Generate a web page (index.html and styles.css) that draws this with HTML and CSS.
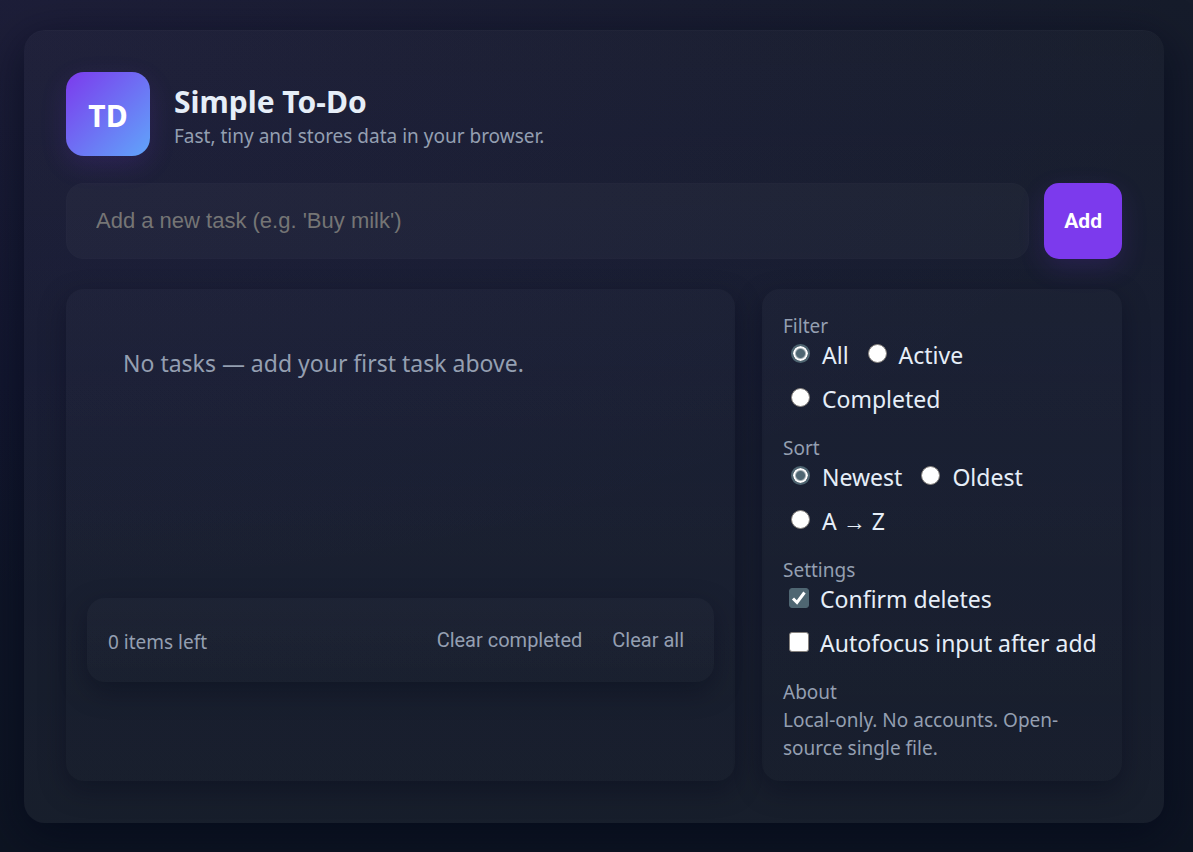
FILE: index.html
```html
<!DOCTYPE html>
<html lang="en">
<head>
<meta charset="utf-8">
<meta name="viewport" content="width=device-width, initial-scale=1">
<title>Simple To-Do</title>
<link rel="stylesheet" href="styles.css">
</head>
<body>
<main class="app">
  <header class="header">
    <div class="logo">TD</div>
    <div class="heading">
      <h1 class="title">Simple To-Do</h1>
      <p class="muted">Fast, tiny and stores data in your browser.</p>
    </div>
  </header>
  <form class="add-form">
    <input class="task-input" type="text" aria-label="New task" placeholder="Add a new task (e.g. 'Buy milk')">
    <button class="add-button" type="button">Add</button>
  </form>
  <div class="columns">
    <section class="panel tasks">
      <p class="empty">No tasks — add your first task above.</p>
      <div class="panel summary">
        <span class="muted count">0 items left</span>
        <div class="actions">
          <button class="text-button" type="button">Clear completed</button>
          <button class="text-button" type="button">Clear all</button>
        </div>
      </div>
    </section>
    <aside class="panel sidebar">
      <fieldset class="group">
        <legend class="muted">Filter</legend>
        <div class="options">
          <label class="option"><input class="radio" type="radio" name="filter" checked>All</label>
          <label class="option"><input class="radio" type="radio" name="filter">Active</label>
          <label class="option"><input class="radio" type="radio" name="filter">Completed</label>
        </div>
      </fieldset>
      <fieldset class="group">
        <legend class="muted">Sort</legend>
        <div class="options">
          <label class="option"><input class="radio" type="radio" name="sort" checked>Newest</label>
          <label class="option"><input class="radio" type="radio" name="sort">Oldest</label>
          <label class="option"><input class="radio" type="radio" name="sort">A → Z</label>
        </div>
      </fieldset>
      <fieldset class="group">
        <legend class="muted">Settings</legend>
        <div class="options checks">
          <label class="option"><input class="check" type="checkbox" checked>Confirm deletes</label>
          <label class="option"><input class="check" type="checkbox">Autofocus input after add</label>
        </div>
      </fieldset>
      <div class="about">
        <h2 class="muted">About</h2>
        <p class="muted">Local-only. No accounts. Open-source single file.</p>
      </div>
    </aside>
  </div>
</main>
</body>
</html>
```
FILE: styles.css
```css
* { box-sizing: border-box; }
body {
  margin: 0;
  min-height: 100vh;
  padding: 30px 29px 29px 24px;
  color: #e6eef8;
  font-family: "Segoe UI", "Noto Sans", sans-serif;
  font-size: 23px;
  background:
    radial-gradient(1200px 600px at 0 0, rgba(124, 58, 237, 0.07), transparent),
    linear-gradient(180deg, #161c2b, #10162a 45%, #0d1422);
}
h1, h2, p, fieldset { margin: 0; }
.app {
  padding: 42px;
  border-radius: 21px;
  background: linear-gradient(180deg, rgba(255, 255, 255, 0.014), rgba(255, 255, 255, 0.042));
  box-shadow: 0 12px 45px rgba(2, 6, 23, 0.6), inset 0 1px 0 rgba(255, 255, 255, 0.02);
}
.header { display: flex; align-items: center; gap: 24px; margin-bottom: 27px; }
.heading { padding-top: 3px; }
.logo {
  display: grid;
  place-items: center;
  width: 84px;
  height: 84px;
  padding-top: 3px;
  border-radius: 18px;
  background: linear-gradient(135deg, #7c3aed, #60a5fa);
  box-shadow: 0 9px 27px rgba(124, 58, 237, 0.16);
  color: #fff;
  font-size: 30px;
  font-weight: 700;
}
.title { font-size: 30px; line-height: 40px; font-weight: 700; }
.muted { color: #949fb1; font-size: 19px; line-height: 28px; font-weight: 400; }
.add-form { display: flex; gap: 15px; margin-bottom: 30px; }
.task-input {
  flex: 1;
  min-width: 0;
  height: 76px;
  padding: 0 29px;
  border: 1px solid rgba(255, 255, 255, 0.01);
  border-radius: 18px;
  background: rgba(255, 255, 255, 0.026);
  color: inherit;
  font-family: "Liberation Sans", Arial, sans-serif;
  font-size: 22px;
}
.task-input::placeholder { color: #757575; }
.add-button {
  padding: 0 20px;
  border: 0;
  border-radius: 15px;
  background: #7c3aed;
  box-shadow: 0 9px 27px rgba(124, 58, 237, 0.16);
  color: #fff;
  font-family: Roboto, sans-serif;
  font-size: 21px;
  font-weight: 700;
}
.columns { display: grid; grid-template-columns: 1fr 360px; gap: 27px; }
.panel {
  padding: 21px;
  border-radius: 18px;
  background: linear-gradient(180deg, rgba(255, 255, 255, 0.02), rgba(255, 255, 255, 0.002));
  box-shadow: 0 9px 27px rgba(2, 6, 23, 0.34);
}
.tasks { display: flex; flex-direction: column; }
.empty { min-height: 288px; padding: 36px; color: #949fb1; line-height: 34px; }
.summary { display: flex; align-items: center; justify-content: space-between; min-height: 84px; }
.count { padding-top: 4px; }
.actions { display: flex; gap: 12px; }
.text-button {
  padding: 9px;
  border: 0;
  background: transparent;
  color: #949fb1;
  font-family: Roboto, sans-serif;
  font-size: 20px;
}
.sidebar { display: flex; flex-direction: column; gap: 16px; padding-bottom: 19px; }
.group { min-width: 0; padding: 0; border: 0; }
.group legend { padding: 4px 0 0; line-height: 24px; }
.options { display: flex; flex-wrap: wrap; gap: 10px 19px; padding-left: 8px; }
.checks { padding-left: 6px; flex-direction: column; }
.option { display: flex; align-items: center; gap: 12px; line-height: 34px; white-space: nowrap; }
.checks .option { gap: 11px; }
.about { padding-top: 2px; }
.radio, .check {
  appearance: none;
  flex: none;
  margin: 0 0 3px;
  border: 1px solid #85817d;
  background: #fff;
}
.radio { width: 19px; height: 19px; border-radius: 50%; }
.radio:checked {
  border: 2px solid #4f6672;
  background: radial-gradient(circle, #4f6672 4px, #fff 6px);
  background-clip: padding-box;
}
.check { width: 20px; height: 20px; border-radius: 3px; }
.check:checked {
  border-color: #4f6672;
  background: #4f6672 url("data:image/svg+xml,%3Csvg xmlns='http://www.w3.org/2000/svg' viewBox='0 0 18 18'%3E%3Cpath d='M3 9.5l4 4 7.5-10' fill='none' stroke='white' stroke-width='3'/%3E%3C/svg%3E") center / 18px no-repeat;
}
```
